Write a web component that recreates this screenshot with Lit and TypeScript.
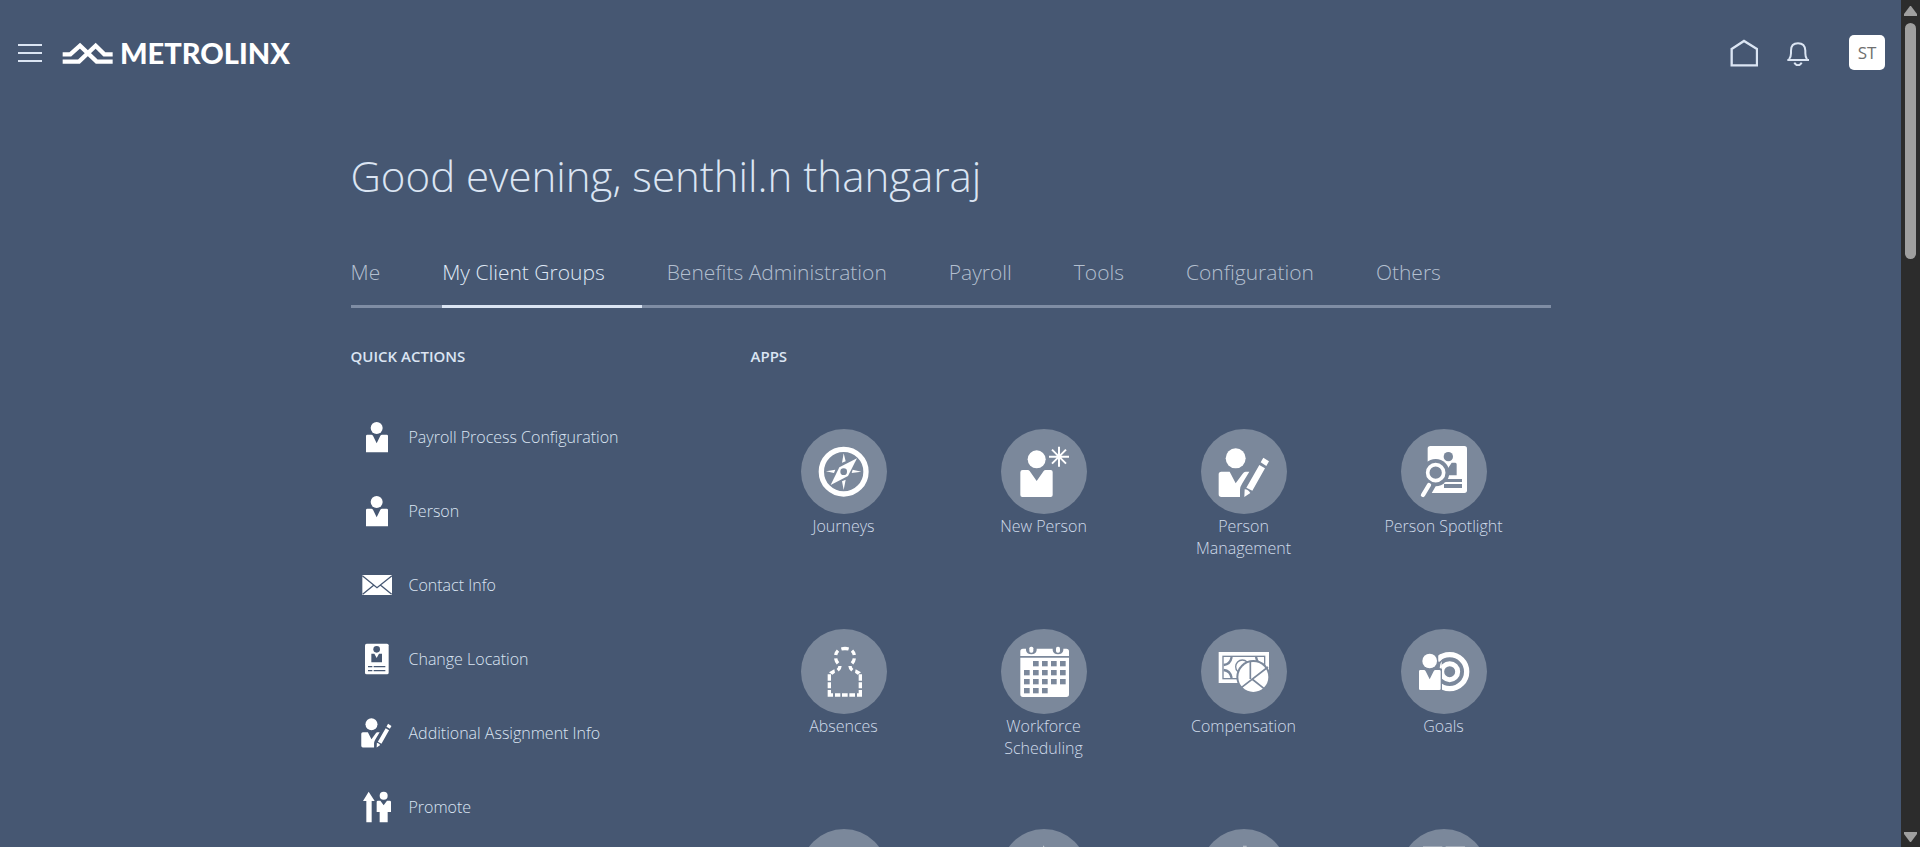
import { LitElement, html, css, svg, SVGTemplateResult } from "lit";
import { customElement, property, state } from "lit/decorators.js";

const manage = svg`
  <circle cx="104" cy="88" r="30"/>
  <path d="M61 128H86L104 163L125 134Q129 128 134 128H145L124 163Q117 174 117 182V204H61Q53 204 53 196V136Q53 128 61 128Z"/>
  <path d="M187 86L204 97L196 111L179 100ZM175 108L192 118L154 185L136 176ZM131 181Q142 182 148 192L130 204Z"/>`;

const calendarCells = [
  [1, 2, 3, 4],
  [0, 1, 2, 3, 4],
  [0, 1, 2, 3, 4],
  [0, 1, 2],
];

/* Large glyphs, drawn on the 258 x 255 grid of an app badge. */
const appGlyphs: Record<string, SVGTemplateResult> = {
  journeys: svg`
    <circle cx="128" cy="128" r="67" fill="none" stroke="#fff" stroke-width="16"/>
    <path d="M168 88L141 141L89 168L115 115Z"/>
    <circle class="cut" cx="128" cy="128" r="10"/>
    <path d="M128 73L123 101L134 97ZM75 127L103 122L99 132ZM181 128L155 122L152 132ZM128 183L123 157L134 152Z"/>`,
  newPerson: svg`
    <circle cx="107" cy="91" r="27"/>
    <path d="M65 123H80Q84 123 86 126L107 156L128 126Q130 123 134 123H149Q155 123 155 129V198Q155 204 149 204H64Q58 204 58 198V130Q58 123 65 123Z"/>
    <path d="M174 53V113M144 83H204M153 62L195 104M195 62L153 104" fill="none" stroke="#fff" stroke-width="6"/>`,
  manage,
  spotlight: svg`
    <rect x="80" y="51" width="118" height="141" rx="8"/>
    <circle class="cut" cx="142" cy="83" r="14"/>
    <path class="cut" d="M128 101L141 118L152 101H163Q167 101 167 106V139H128ZM129 150H183V159H129ZM129 165H183V177H129Z"/>
    <path class="cut" d="M76 131H104V172L84 206H64L70 180Z"/>
    <circle class="cut" cx="104" cy="131" r="41"/>
    <path d="M129 161H183V163H129Z"/>
    <circle cx="104" cy="131" r="24" fill="none" stroke="#fff" stroke-width="11"/>
    <path d="M84 168L66 198" fill="none" stroke="#fff" stroke-width="13" stroke-linecap="round"/>`,
  absences: svg`
    <path fill="none" stroke="#fff" stroke-width="10" d="M121 60Q132 57 143 60M104 78Q105 71 111 65M160 78Q159 71 153 65M104 88Q105 96 111 103M160 88Q159 96 153 103M117 111Q117 118 110 124M147 111Q147 118 154 124M85 136V155M85 160V178M85 183V198H96M102 198H118M123 198H140M145 198H162M168 198H178V183M178 178V160M178 155V136"/>
    <path d="M84 130L100 121L102 131L94 137ZM180 130L164 121L162 131L170 137Z"/>`,
  calendar: svg`
    <path d="M66 59H196Q204 59 204 67V81H58V67Q58 59 66 59ZM58 86H204V196Q204 204 196 204H66Q58 204 58 196Z"/>
    <path class="cut" d="M75 53H107V64Q105 76 91 76T75 64ZM155 53H187V64Q185 76 171 76T155 64Z"/>
    <rect x="85" y="53" width="12" height="18" rx="5"/>
    <rect x="165" y="53" width="12" height="18" rx="5"/>
    ${calendarCells.map((row, r) => row.map((c) => svg`<rect class="cut" x=${69 + c * 27} y=${96 + r * 27} width="17" height="16"/>`))}`,
  compensation: svg`
    <rect x="53" y="69" width="151" height="93"/>
    <rect x="66" y="82" width="125" height="67" fill="none" class="cut-line" stroke-width="4"/>
    <path class="cut-line" fill="none" stroke-width="7" d="M68 108Q88 106 92 84M165 84Q169 106 189 108M68 123Q88 125 92 147"/>
    <circle class="cut-line" cx="124" cy="113" r="20" stroke-width="4"/>
    <circle class="cut" cx="157" cy="144" r="51"/>
    <circle cx="157" cy="144" r="45"/>
    <path class="cut-line" fill="none" stroke-width="5" d="M148 97V150M201 114L117 179M153 150L197 185"/>`,
  goals: svg`
    <circle cx="146" cy="128" r="51" fill="none" stroke="#fff" stroke-width="16"/>
    <circle cx="146" cy="128" r="24" fill="none" stroke="#fff" stroke-width="15"/>
    <path class="cut" d="M84 60H112V94Q118 116 123 117V192H80Z"/>
    <path d="M122 97A38 38 0 0 0 116 116L122 120Z"/>
    <path d="M113 79Q115 76 122 74V92L113 98Z"/>
    <circle cx="86" cy="96" r="22"/>
    <path d="M58 123H69Q72 123 74 127L86 151L98 127Q100 123 103 123H115Q119 123 119 127V179Q119 183 115 183H58Q54 183 54 179V127Q54 123 58 123Z"/>`,
  blank: svg``,
  point: svg`<path d="M128 49L131 56H125Z" opacity=".6"/>`,
  rod: svg`<path d="M126 50H137V60H126Z" opacity=".4"/>`,
  tiles: svg`<path d="M66 51H124V60H66ZM134 51H192V60H134Z" opacity=".3"/>`,
};

/* Small glyphs, drawn on a 96 x 96 grid. */
const actionGlyphs: Record<string, SVGTemplateResult> = {
  person: svg`
    <circle cx="47" cy="21" r="18"/>
    <path d="M19 41H31Q34 41 36 44L47 67L58 44Q60 41 63 41H77Q81 41 81 45V94H15V45Q15 41 19 41Z"/>`,
  mail: svg`
    <rect x="4" y="18" width="89" height="60"/>
    <path class="page-line" d="M4 20L48 56L93 20M5 76L38 49M92 76L59 49" fill="none" stroke-width="4"/>`,
  badge: svg`
    <rect x="12" y="2" width="71" height="92" rx="5"/>
    <circle class="page" cx="47" cy="19" r="10"/>
    <path class="page" d="M31 32H40L47 45L54 32H63V58H31ZM21 69H34V73H21ZM38 69H73V73H38ZM21 81H34V85H21ZM38 81H73V85H38Z"/>`,
  manage: svg`<g transform="translate(-31 -31) scale(.6)">${manage}</g>`,
  promote: svg`
    <path d="M23 2L41 30H32V94H16V30H6Z"/>
    <circle cx="68" cy="14" r="12"/>
    <path d="M51 29H58L68 43L78 29H86Q90 29 90 33V63H80V94H56V63H47V33Q47 29 51 29Z"/>`,
};

const tabs = ["Me", "My Client Groups", "Benefits Administration", "Payroll", "Tools", "Configuration", "Others"];

const actions = [
  { label: "Payroll Process Configuration", glyph: "person" },
  { label: "Person", glyph: "person" },
  { label: "Contact Info", glyph: "mail" },
  { label: "Change Location", glyph: "badge" },
  { label: "Additional Assignment Info", glyph: "manage" },
  { label: "Promote", glyph: "promote" },
];

const apps = [
  { label: "Journeys", glyph: "journeys" },
  { label: "New Person", glyph: "newPerson" },
  { label: "Person Management", glyph: "manage" },
  { label: "Person Spotlight", glyph: "spotlight" },
  { label: "Absences", glyph: "absences" },
  { label: "Workforce Scheduling", glyph: "calendar" },
  { label: "Compensation", glyph: "compensation" },
  { label: "Goals", glyph: "goals" },
  { label: "", glyph: "blank" },
  { label: "", glyph: "point" },
  { label: "", glyph: "rod" },
  { label: "", glyph: "tiles" },
];

@customElement("app-tile")
class AppTile extends LitElement {
  @property() label = "";
  @property() glyph = "blank";

  static styles = css`
    :host { display: block; }
    .tile {
      display: flex;
      flex-direction: column;
      align-items: center;
      gap: 1px;
      color: #d0dbea;
      text-decoration: none;
      text-align: center;
      font-size: 16px;
      line-height: 22px;
    }
    .disc {
      width: 86px;
      height: 85px;
      border-radius: 50%;
      background: #7b889b;
    }
    .glyph { display: block; width: 100%; height: 100%; fill: #fff; }
    .cut { fill: #7b889b; }
    .cut-line { stroke: #7b889b; }
    .name { max-width: 136px; }
  `;

  render() {
    return html`<a class="tile" href="#">
      <span class="disc"><svg class="glyph" viewBox="0 0 258 255" aria-hidden="true">${appGlyphs[this.glyph]}</svg></span>
      <span class="name">${this.label}</span>
    </a>`;
  }
}

@customElement("app-root")
class AppRoot extends LitElement {
  @state() private active = 1;

  static styles = css`
    :host {
      display: flex;
      height: 100vh;
      overflow: hidden;
      background: #465772;
      color: #dbe5f3;
      font-family: "Open Sans", "Noto Sans", sans-serif;
      font-weight: 300;
    }
    * { box-sizing: border-box; }
    button { font: inherit; color: inherit; background: none; border: 0; padding: 0; cursor: pointer; }
    svg { display: block; }
    .page-view { flex: 1; min-width: 0; overflow: hidden; }
    .topbar {
      display: flex;
      align-items: center;
      height: 105px;
      padding: 0 16px 0 18px;
    }
    .stroke { fill: none; stroke: #dbe5f3; }
    .brand {
      display: flex;
      align-items: center;
      gap: 6px;
      margin-left: 20px;
      color: #fff;
      text-decoration: none;
      font: 900 29px/32px Lato, sans-serif;
    }
    .tools { display: flex; align-items: center; margin-left: auto; }
    .bell { margin: 0 38px 0 27px; }
    .avatar {
      width: 36px;
      height: 35px;
      border-radius: 5px;
      background: #fff;
      color: #6f6f6f;
      font-size: 17px;
      font-weight: 400;
    }
    .content { max-width: 1200px; margin: 0 auto; }
    .greeting {
      margin: 39px 0 0;
      font-size: 42px;
      line-height: 64px;
      font-weight: 300;
    }
    .tabs {
      display: flex;
      gap: 25px;
      margin-top: 48px;
      box-shadow: inset 0 -3px #7f8da4;
    }
    .tab {
      padding: 0 37px 17px 0;
      font-size: 21px;
      line-height: 32px;
      color: #b3bfcf;
      border-bottom: 3px solid transparent;
      white-space: nowrap;
    }
    .tab.active { color: #dfe8f5; border-color: #dbe5f3; }
    .columns { display: grid; grid-template-columns: 1fr 2fr; margin-top: 37px; }
    .heading { margin: 0; font-size: 15px; line-height: 22px; font-weight: 600; }
    .actions { list-style: none; margin: 33px 0 0; padding: 0 0 0 10px; }
    .action {
      display: flex;
      align-items: center;
      gap: 16px;
      height: 74px;
      color: inherit;
      text-decoration: none;
      font-size: 16px;
    }
    .action-glyph { width: 32px; height: 32px; fill: #fff; }
    .page { fill: #465772; }
    .page-line { stroke: #465772; }
    .apps {
      display: grid;
      grid-template-columns: repeat(4, 1fr);
      grid-auto-rows: 200px;
      margin: 62px 7px 0 -7px;
    }
    .scrollbar {
      display: flex;
      flex-direction: column;
      align-items: center;
      width: 19px;
      padding: 6px 0 5px;
      background: #2c2c2c;
    }
    .arrow { fill: #9f9f9f; }
    .thumb { width: 11px; height: 236px; margin-top: 7px; border-radius: 6px; background: #9f9f9f; }
    .arrow.down { margin-top: auto; }
  `;

  render() {
    return html`
      <div class="page-view">
        <header class="topbar">
          <button aria-label="Navigator">
            <svg class="stroke" width="24" height="18" viewBox="0 0 24 18" stroke-width="2"><path d="M0 1H24M0 9H24M0 17H24"/></svg>
          </button>
          <a class="brand" href="#">
            <svg width="52" height="22" viewBox="0 0 156 66" fill="none" stroke="#fff" stroke-width="13" aria-hidden="true">
              <path d="M2 37H25L54 11L104 59H152M2 59H51L101 11L127 37H152"/>
            </svg>
            <span>METROLINX</span>
          </a>
          <div class="tools">
            <button aria-label="Home">
              <svg class="stroke" width="28" height="28" viewBox="0 0 84 84" stroke-width="7"><path d="M5 30L42 6L81 30V79H5Z"/></svg>
            </button>
            <button class="bell" aria-label="Notifications">
              <svg class="stroke" width="26" height="26" viewBox="0 0 78 78" stroke-width="6">
                <path d="M7 60H72M12 58Q18 52 18 40V32Q18 10 39 10T61 32V40Q61 52 66 58M28 68Q32 76 39 76T50 68"/>
              </svg>
            </button>
            <button class="avatar" aria-label="Settings and Actions">ST</button>
          </div>
        </header>
        <main class="content">
          <h1 class="greeting">Good evening, senthil.n thangaraj</h1>
          <nav class="tabs" role="tablist">
            ${tabs.map((t, i) => html`<button role="tab" class="tab ${i === this.active ? "active" : ""}"
              aria-selected=${i === this.active} @click=${() => (this.active = i)}>${t}</button>`)}
          </nav>
          <div class="columns">
            <section>
              <h2 class="heading">QUICK ACTIONS</h2>
              <ul class="actions">
                ${actions.map((a) => html`<li><a class="action" href="#">
                  <svg class="action-glyph" viewBox="0 0 96 96" aria-hidden="true">${actionGlyphs[a.glyph]}</svg>
                  <span>${a.label}</span></a></li>`)}
              </ul>
            </section>
            <section>
              <h2 class="heading">APPS</h2>
              <div class="apps">
                ${apps.map((a) => html`<app-tile .label=${a.label} .glyph=${a.glyph}></app-tile>`)}
              </div>
            </section>
          </div>
        </main>
      </div>
      <div class="scrollbar" aria-hidden="true">
        <svg class="arrow" width="13" height="10" viewBox="0 0 13 10"><path d="M6 0H7L13 8V10H0V8Z"/></svg>
        <div class="thumb"></div>
        <svg class="arrow down" width="13" height="10" viewBox="0 0 13 10"><path d="M6 10H7L13 2V0H0V2Z"/></svg>
      </div>
    `;
  }
}
